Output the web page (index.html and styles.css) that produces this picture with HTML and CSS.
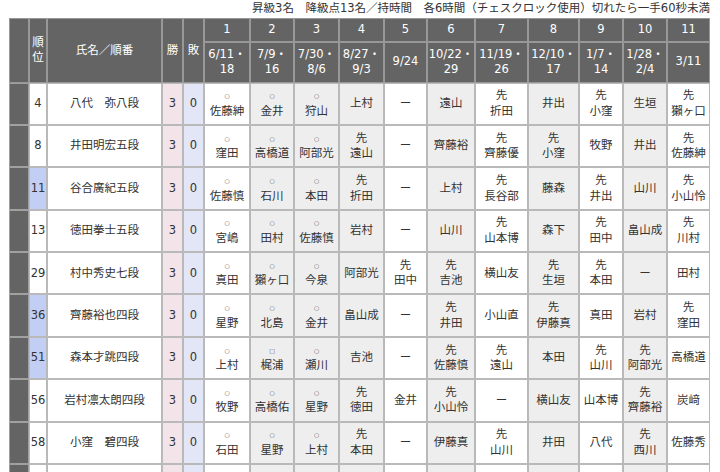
FILE: index.html
```html
<!DOCTYPE html>
<html lang="ja">
<head>
<meta charset="utf-8">
<title>順位戦</title>
<link rel="stylesheet" href="styles.css">
</head>
<body>
<div class="page">
  <div class="note">昇級3名　降級点13名／持時間　各6時間（チェスクロック使用）切れたら一手60秒未満</div>
  <table class="league">
    <colgroup>
      <col class="c-d"><col class="c-rank"><col class="c-name"><col class="c-wl"><col class="c-wl">
      <col class="c46"><col class="c44"><col class="c45"><col class="c45"><col class="c43"><col class="c48">
      <col class="c53"><col class="c51"><col class="c44"><col class="c44"><col class="c43">
    </colgroup>
    <thead>
      <tr class="h1">
        <th rowspan="2"></th>
        <th rowspan="2">順位</th>
        <th rowspan="2">氏名／順番</th>
        <th rowspan="2">勝</th>
        <th rowspan="2">敗</th>
        <th>1</th><th>2</th><th>3</th><th>4</th><th>5</th><th>6</th><th>7</th><th>8</th><th>9</th><th>10</th><th>11</th>
      </tr>
      <tr class="h2">
        <th>6/11・<br>18</th><th>7/9・<br>16</th><th>7/30・<br>8/6</th><th>8/27・<br>9/3</th><th>9/24</th><th>10/22・<br>29</th><th>11/19・<br>26</th><th>12/10・<br>17</th><th>1/7・<br>14</th><th>1/28・<br>2/4</th><th>3/11</th>
      </tr>
    </thead>
    <tbody>
      <tr class="r">
        <td class="d"></td><td>4</td><td>八代　弥八段</td><td class="w">3</td><td class="l">0</td>
        <td><span class="mk">○</span>佐藤紳</td><td class="g"><span class="mk">○</span>金井</td><td class="g"><span class="mk">○</span>狩山</td><td class="g">上村</td><td>ー</td><td class="g">遠山</td><td>先<br>折田</td><td class="g">井出</td><td>先<br>小窪</td><td class="g">生垣</td><td>先<br>獺ヶ口</td>
      </tr>
      <tr class="r">
        <td class="d"></td><td>8</td><td>井田明宏五段</td><td class="w">3</td><td class="l">0</td>
        <td><span class="mk">○</span>窪田</td><td class="g"><span class="mk">○</span>高橋道</td><td class="g"><span class="mk">○</span>阿部光</td><td class="g">先<br>遠山</td><td>ー</td><td class="g">齊藤裕</td><td>先<br>齊藤優</td><td class="g">先<br>小窪</td><td>牧野</td><td class="g">井出</td><td>先<br>佐藤紳</td>
      </tr>
      <tr class="r">
        <td class="d"></td><td class="hl">11</td><td>谷合廣紀五段</td><td class="w">3</td><td class="l">0</td>
        <td><span class="mk">○</span>佐藤慎</td><td class="g"><span class="mk">○</span>石川</td><td class="g"><span class="mk">○</span>本田</td><td class="g">先<br>折田</td><td>ー</td><td class="g">上村</td><td>先<br>長谷部</td><td class="g">藤森</td><td>先<br>井出</td><td class="g">山川</td><td>先<br>小山怜</td>
      </tr>
      <tr class="r">
        <td class="d"></td><td>13</td><td>徳田拳士五段</td><td class="w">3</td><td class="l">0</td>
        <td><span class="mk">○</span>宮嶋</td><td class="g"><span class="mk">○</span>田村</td><td class="g"><span class="mk">○</span>佐藤慎</td><td class="g">岩村</td><td>ー</td><td class="g">山川</td><td>先<br>山本博</td><td class="g">森下</td><td>先<br>田中</td><td class="g">畠山成</td><td>先<br>川村</td>
      </tr>
      <tr class="r">
        <td class="d"></td><td>29</td><td>村中秀史七段</td><td class="w">3</td><td class="l">0</td>
        <td><span class="mk">○</span>真田</td><td class="g"><span class="mk">○</span>獺ヶ口</td><td class="g"><span class="mk">○</span>今泉</td><td class="g">阿部光</td><td>先<br>田中</td><td class="g">先<br>吉池</td><td>横山友</td><td class="g">先<br>生垣</td><td>先<br>本田</td><td class="g">ー</td><td>田村</td>
      </tr>
      <tr class="r">
        <td class="d"></td><td class="hl">36</td><td>齊藤裕也四段</td><td class="w">3</td><td class="l">0</td>
        <td><span class="mk">○</span>星野</td><td class="g"><span class="mk">○</span>北島</td><td class="g"><span class="mk">○</span>金井</td><td class="g">畠山成</td><td>ー</td><td class="g">先<br>井田</td><td>小山直</td><td class="g">先<br>伊藤真</td><td>真田</td><td class="g">岩村</td><td>先<br>窪田</td>
      </tr>
      <tr class="r">
        <td class="d"></td><td class="hl">51</td><td>森本才跳四段</td><td class="w">3</td><td class="l">0</td>
        <td><span class="mk">○</span>上村</td><td class="g"><span class="mk">□</span>梶浦</td><td class="g"><span class="mk">○</span>瀬川</td><td class="g">吉池</td><td>ー</td><td class="g">先<br>佐藤慎</td><td>先<br>遠山</td><td class="g">本田</td><td>先<br>山川</td><td class="g">先<br>阿部光</td><td>高橋道</td>
      </tr>
      <tr class="r">
        <td class="d"></td><td>56</td><td>岩村凛太朗四段</td><td class="w">3</td><td class="l">0</td>
        <td><span class="mk">○</span>牧野</td><td class="g"><span class="mk">○</span>高橋佑</td><td class="g"><span class="mk">○</span>星野</td><td class="g">先<br>徳田</td><td>金井</td><td class="g">先<br>小山怜</td><td>ー</td><td class="g">横山友</td><td>山本博</td><td class="g">先<br>齊藤裕</td><td>炭﨑</td>
      </tr>
      <tr class="r">
        <td class="d"></td><td>58</td><td>小窪　碧四段</td><td class="w">3</td><td class="l">0</td>
        <td><span class="mk">○</span>石田</td><td class="g"><span class="mk">○</span>星野</td><td class="g"><span class="mk">○</span>上村</td><td class="g">先<br>本田</td><td>ー</td><td class="g">伊藤真</td><td>先<br>山川</td><td class="g">井田</td><td>八代</td><td class="g">先<br>西川</td><td>佐藤秀</td>
      </tr>
      <tr class="r">
        <td class="d"></td><td></td><td></td><td class="w"></td><td class="l"></td>
        <td></td><td class="g"></td><td class="g"></td><td class="g"></td><td></td><td class="g"></td><td></td><td class="g"></td><td></td><td class="g"></td><td></td>
      </tr>
    </tbody>
  </table>
</div>
</body>
</html>
```

FILE: styles.css
```css
html, body {
  margin: 0;
  padding: 0;
  background: #ffffff;
}

body {
  font-family: "DejaVu Sans", "Noto Sans CJK JP", sans-serif;
  font-size: 11.5px;
  color: #333333;
}

.page {
  width: 701px;
  margin-left: 9px;
}

.note {
  height: 18px;
  line-height: 17px;
  text-align: right;
  white-space: nowrap;
}

.league {
  border-collapse: separate;
  border-spacing: 0;
  table-layout: fixed;
  width: 701px;
}

.c-d { width: 20px; }
.c-rank { width: 18px; }
.c-name { width: 115px; }
.c-wl { width: 21px; }
.c43 { width: 43px; }
.c44 { width: 44px; }
.c45 { width: 45px; }
.c46 { width: 46px; }
.c48 { width: 48px; }
.c51 { width: 51px; }
.c53 { width: 53px; }

.league th,
.league td {
  padding: 0;
  text-align: center;
  vertical-align: middle;
  line-height: 15.5px;
}

.league th {
  background: #646464;
  color: #ffffff;
  font-weight: normal;
  border: 1px solid #989898;
}

.league td {
  background: #ffffff;
  border: 1px solid #b9b9b9;
}

.h1 { height: 23.7px; }
.h2 { height: 41px; }
.r { height: 42.37px; }

.league td.d {
  background: #646464;
  border-color: #a0a0a0;
}

.league td.w { background: #f3e4e9; }
.league td.l { background: #e3e6f6; }
.league td.hl { background: #c3cef5; }
.league td.g { background: #eeeeee; }

.mk {
  display: block;
  font-size: 6px;
  line-height: 15.5px;
  color: #555555;
}
```
